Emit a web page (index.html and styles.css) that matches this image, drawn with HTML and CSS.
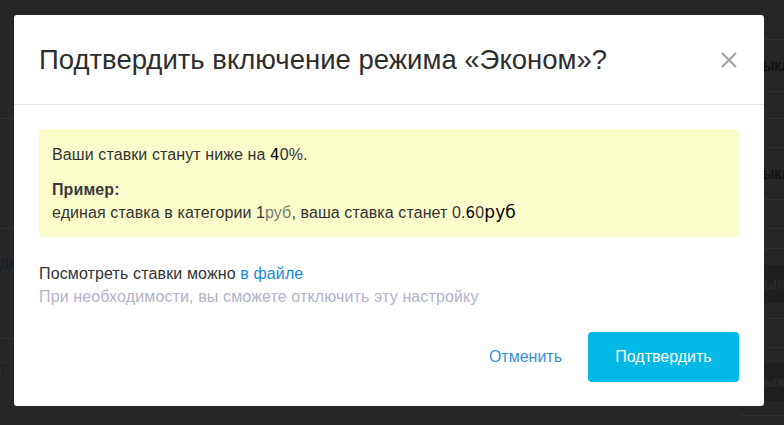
FILE: index.html
```html
<!DOCTYPE html>
<html>
<head>
    <meta charset="UTF-8">
    <title>Режим «Эконом»</title>
    <link rel="stylesheet" href="styles.css">
</head>
<body>
    <!-- страница под затемнением -->
    <div class="backdrop">
        <div class="side side-left">
            <div class="row" style="height: 119px"></div>
            <div class="row" style="height: 110px"></div>
            <div class="row row-text" style="height: 110px"><span class="cut">дкл</span></div>
            <div class="row row-text row-last"><span class="cut cut-s">ст</span></div>
        </div>
        <div class="side side-right">
            <div class="row" style="height: 40px"></div>
            <div class="row row-text" style="height: 52px"><span class="off">Выкл</span></div>
            <div class="row" style="height: 27px"></div>
            <div class="row" style="height: 29px"></div>
            <div class="row row-text" style="height: 52px"><span class="off">Выкл</span></div>
            <div class="row" style="height: 29px"></div>
            <div class="row" style="height: 20px"></div>
            <div class="row row-band" style="height: 70px"><span class="band">Выкл</span></div>
            <div class="row" style="height: 29px"></div>
            <div class="row row-band" style="height: 68px"><span class="band">Выкл</span></div>
        </div>
    </div>

    <div class="modal">
        <div class="modal-header">
            <h1>Подтвердить включение режима «Эконом»?</h1>
            <button class="close" type="button">
                <svg width="18" height="16" viewBox="0 0 18 16">
                    <path d="M2 1 L16 15 M16 1 L2 15" stroke="#a3a3a3" stroke-width="2.2" fill="none"/>
                </svg>
            </button>
        </div>
        <div class="modal-body">
            <div class="alert">
                <p class="alert-main">Ваши ставки станут ниже на <span class="alt">4</span>0%.</p>
                <p class="alert-example">
                    <b>Пример:</b><br>
                    единая ставка в категории 1<span class="cur-gray">руб</span>, ваша ставка станет 0.<span class="alt">6</span>0<span class="cur-dark">руб</span>
                </p>
            </div>
            <p class="info">
                Посмотреть ставки можно <a href="#">в файле</a><br>
                <span class="hint">При необходимости, вы сможете отключить эту настройку</span>
            </p>
        </div>
        <div class="modal-footer">
            <button class="btn-cancel" type="button">Отменить</button>
            <button class="btn-confirm" type="button">Подтвердить</button>
        </div>
    </div>
</body>
</html>
```

FILE: styles.css
```css
body {
    font-family: "Liberation Sans", Arial, sans-serif;
    margin: 0;
    width: 784px;
    height: 425px;
    overflow: hidden;
    background-color: #262626;
    position: relative;
}
.backdrop {
    display: flex;
    justify-content: space-between;
    height: 425px;
}
.side {
    display: flex;
    flex-direction: column;
    overflow: hidden;
}
.side-left {
    width: 40px;
}
.side-right {
    width: 44px;
}
.row {
    box-sizing: border-box;
    border-bottom: 1px solid #303030;
    flex-shrink: 0;
}
.row-text {
    display: flex;
    align-items: center;
}
.row-last {
    flex: 1;
    border-bottom: none;
    align-items: flex-start;
    padding-top: 21px;
}
.cut {
    color: #13202b;
    font-size: 16px;
    white-space: nowrap;
    margin-top: -42px;
}
.cut-s {
    margin-left: -9px;
    margin-top: 0;
}
.off {
    color: #0c0c0c;
    font-size: 16px;
    margin-left: 12px;
    white-space: nowrap;
}
.row-band {
    display: flex;
    align-items: center;
}
.band {
    display: block;
    width: 100%;
    height: 38px;
    line-height: 38px;
    background-color: #1e1e1e;
    color: #2a2a2a;
    font-weight: bold;
    font-size: 16px;
    padding-left: 12px;
    white-space: nowrap;
    border-radius: 3px 0 0 3px;
}

.modal {
    position: absolute;
    top: 15px;
    left: 14px;
    width: 750px;
    height: 391px;
    background-color: #fff;
    border-radius: 3px;
    box-sizing: border-box;
}
.modal-header {
    display: flex;
    align-items: center;
    justify-content: space-between;
    height: 90px;
    box-sizing: border-box;
    padding: 0 26px 0 25px;
    border-bottom: 1px solid #e3e3e3;
}
.modal-header h1 {
    margin: 0;
    font-size: 27.5px;
    font-weight: normal;
    color: #2d2d2d;
}
.close {
    border: none;
    background: none;
    padding: 0;
    width: 18px;
    height: 16px;
    display: flex;
    cursor: pointer;
}
.modal-body {
    padding: 24px 25px 0 25px;
}
.alert {
    background-color: #fbfdcb;
    border-radius: 4px;
    padding: 14px 13px 12px 13px;
    color: #333;
    font-size: 16px;
    line-height: 23px;
    letter-spacing: 0.1px;
}
.alert p {
    margin: 0;
}
.alert-main {
    margin-bottom: 11px !important;
}
.alert-example b {
    color: #3a3a3a;
}
.alt {
    font-family: "DejaVu Sans", sans-serif;
    font-size: 15px;
    color: #000;
}
.cur-gray {
    color: #7a7a7a;
}
.cur-dark {
    font-family: "DejaVu Sans", sans-serif;
    font-size: 17px;
    color: #000;
}
.info {
    margin: 25px 0 0 0;
    font-size: 16px;
    line-height: 23px;
    letter-spacing: 0.13px;
    color: #333;
}
.info a {
    color: #1a8ad4;
    text-decoration: none;
}
.hint {
    color: #b2b3c9;
}
.modal-footer {
    display: flex;
    justify-content: flex-end;
    align-items: center;
    gap: 26px;
    padding: 24px 25px 0 25px;
}
.btn-cancel {
    border: none;
    background: none;
    padding: 0;
    font-family: inherit;
    font-size: 16px;
    color: #3a8ed8;
    cursor: pointer;
}
.btn-confirm {
    width: 151px;
    height: 50px;
    border: none;
    border-radius: 4px;
    background-color: #02b8e5;
    color: #fff;
    font-family: inherit;
    font-size: 16px;
    cursor: pointer;
}
```
